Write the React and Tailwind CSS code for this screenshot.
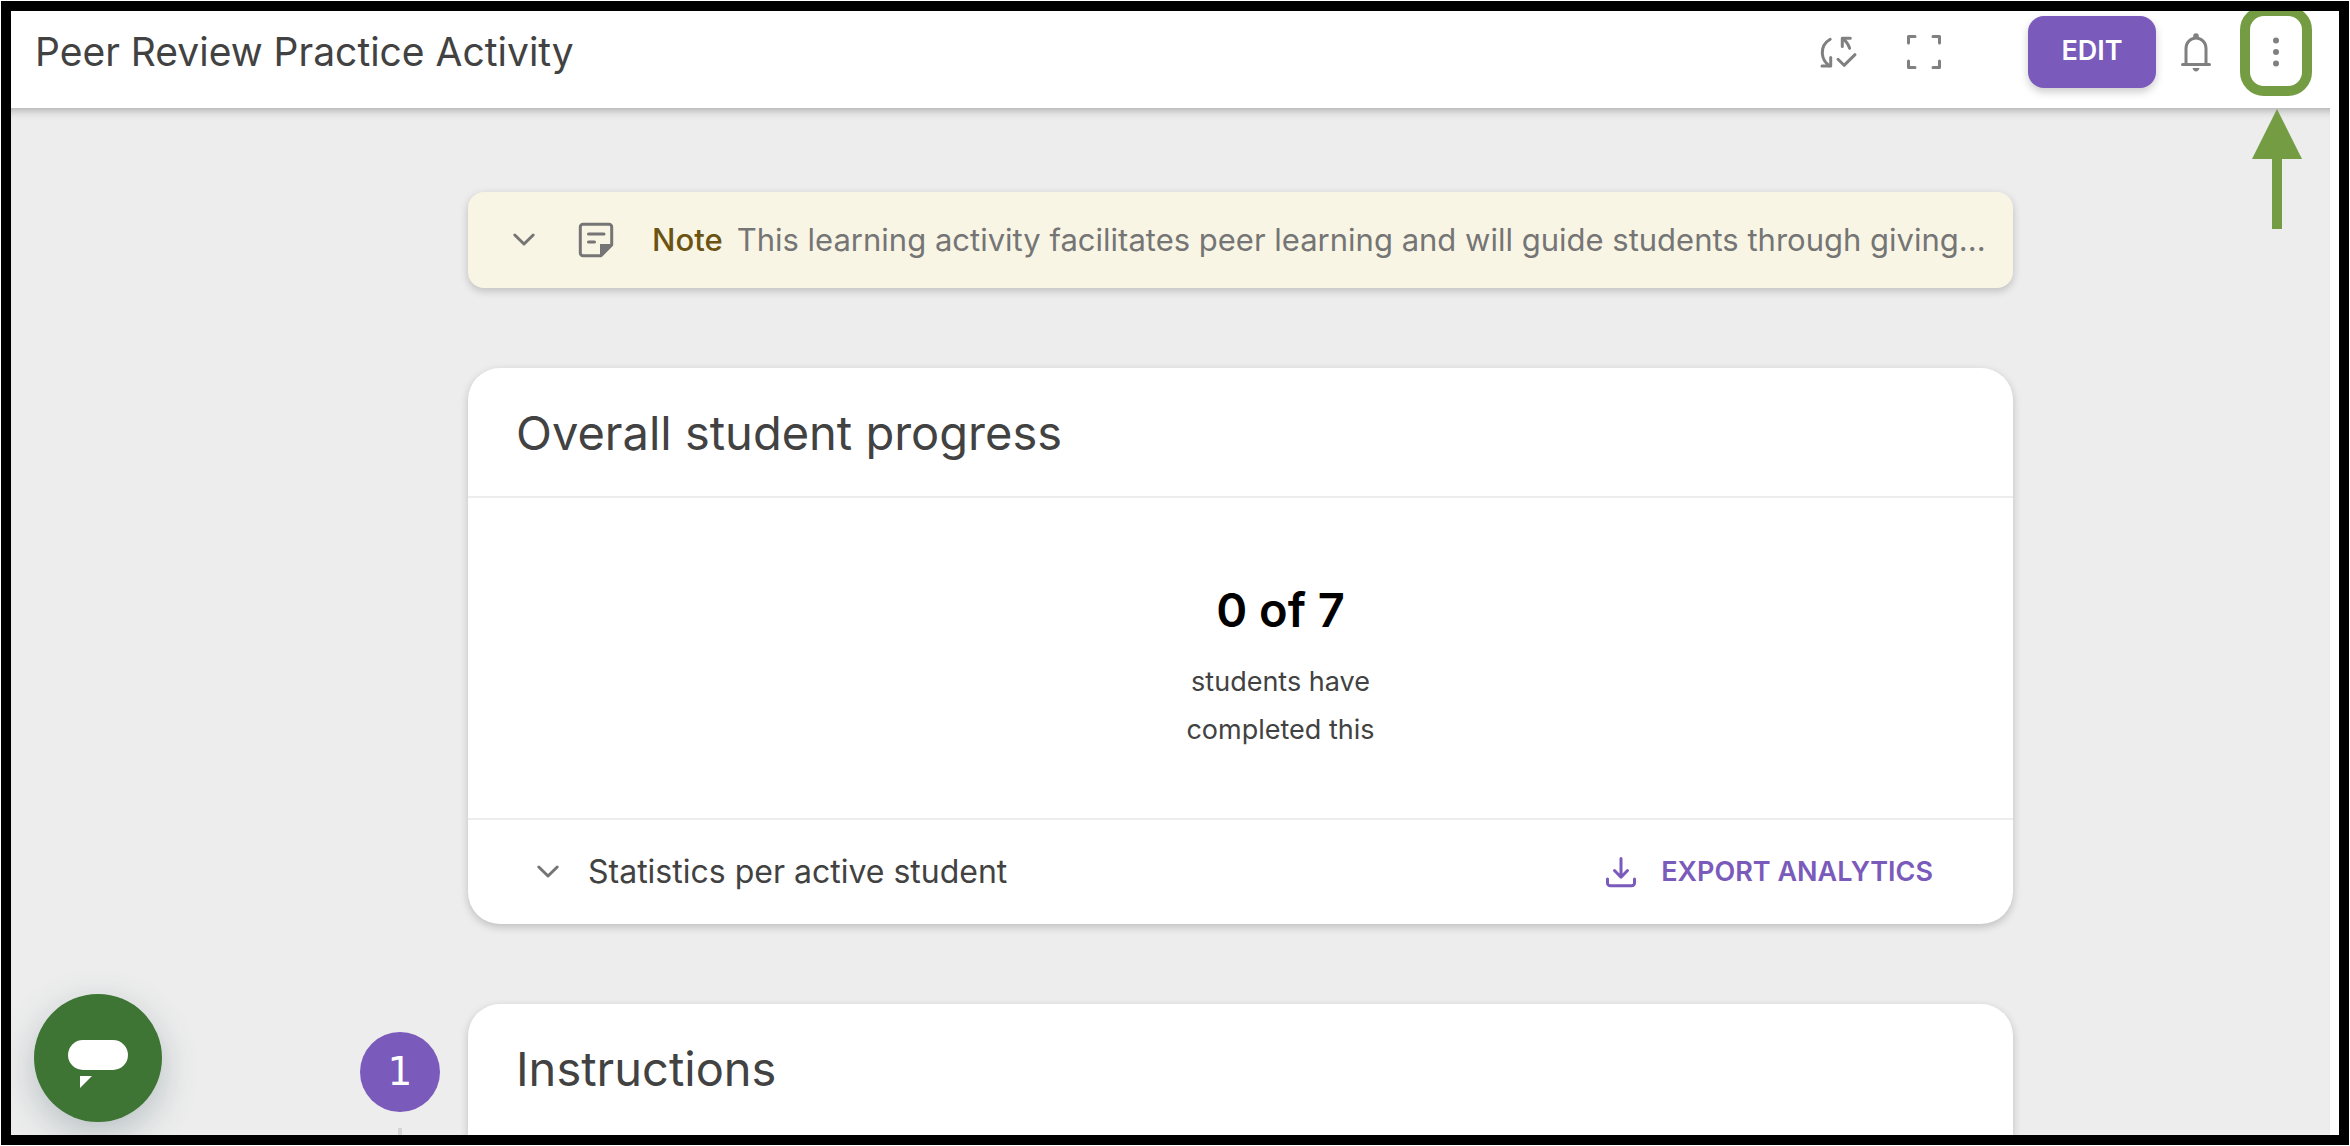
import React, { useState } from 'react';

const Icon = ({ children, className = '' }) => (
  <svg
    viewBox="0 0 48 48"
    className={`w-12 h-12 shrink-0 ${className}`}
    fill="none"
    stroke="currentColor"
    strokeWidth="3"
    strokeLinecap="round"
    strokeLinejoin="round"
    aria-hidden="true"
  >
    {children}
  </svg>
);

const SyncIcon = () => (
  <Icon>
    <path d="M16.2 11.2C10.5 14.5 8 19.5 8.3 25.5c.3 4.6 2.7 9.1 7 12.3" />
    <path d="M16.7 29.5V38H8" />
    <path d="M36.3 10.2h-8v8.3" />
    <path d="M28.6 10.5c3.3 2.6 5.8 5.8 7 9.7" />
    <path d="M24 31.3l6.1 6L41 26.7" />
  </Icon>
);

const FullscreenIcon = () => (
  <Icon>
    <path d="M8.500 15v-6.500H15M33 8.500h6.500V15M39.500 33v6.500H33M15 39.500H8.500V33" />
  </Icon>
);

const BellIcon = () => (
  <Icon>
    <path d="M14 36V20.500a10 10.500 0 0 1 20 0V36M10.500 36.500h27" />
    <circle cx="24" cy="8" r="2.800" fill="currentColor" stroke="none" />
    <path d="M20.500 40h7c-.5 2.200-1.900 3.400-3.500 3.400s-3-1.200-3.500-3.400z" fill="currentColor" stroke="none" />
  </Icon>
);

const DotsIcon = () => (
  <Icon>
    <g fill="currentColor" stroke="none">
      <circle cx="24" cy="12.5" r="3" />
      <circle cx="24" cy="24" r="3" />
      <circle cx="24" cy="35.5" r="3" />
    </g>
  </Icon>
);

const ChevronIcon = () => (
  <Icon className="text-[#757575]">
    <path d="M14.8 19l9.2 9 9.2-9" />
  </Icon>
);

const NoteIcon = () => (
  <Icon className="text-[#757575]">
    <path d="M11 8.300h26a2.700 2.700 0 0 1 2.700 2.700v18L29 39.700H11A2.700 2.700 0 0 1 8.300 37V11A2.700 2.700 0 0 1 11 8.300z" />
    <path d="M28 28h12.500v1.500L29.500 40.500H28z" fill="currentColor" stroke="none" />
    <path d="M16.500 18H32M16.500 26h6" />
  </Icon>
);

const DownloadIcon = () => (
  <Icon>
    <path d="M24 10.500V29M17.500 22.500l6.500 6.700 6.500-6.700M10.500 31v4a2.800 2.800 0 0 0 2.800 2.800h21.400a2.800 2.800 0 0 0 2.800-2.800v-4" />
  </Icon>
);

const IconButton = ({ label, children }) => (
  <button type="button" aria-label={label} className="flex items-center justify-center w-20 h-18 text-[#808080] cursor-pointer">
    {children}
  </button>
);

const Card = ({ title, children }) => (
  <section className="flex-1 min-w-0 bg-white rounded-[32px] shadow-[0_3px_8px_rgba(0,0,0,0.2)]">
    <h2 className="flex items-center h-32 px-12 text-[47px] leading-none">{title}</h2>
    {children}
  </section>
);

const App = () => {
  const [statsOpen, setStatsOpen] = useState(false);
  const [noteOpen, setNoteOpen] = useState(false);

  return (
    <div className="h-screen p-px bg-white font-['Inter',sans-serif] text-[#424242]">
      <div className="relative flex flex-col h-full border-10 border-black bg-white overflow-hidden">

        {/* HEADER */}
        <header className="relative z-10 shrink-0 flex items-center h-[97px] pl-6 pr-[23px] pb-4">
          <h1 className="flex-1 min-w-0 truncate text-[39px] leading-[48px]">Peer Review Practice Activity</h1>
          <div className="flex items-center gap-1.5">
            <IconButton label="Sync status"><SyncIcon /></IconButton>
            <IconButton label="Full screen"><FullscreenIcon /></IconButton>
          </div>
          <button type="button" className="ml-16 w-32 h-18 rounded-2xl bg-[#7a5aba] text-white text-[27px] font-semibold shadow-[0_4px_8px_rgba(0,0,0,0.2)] cursor-pointer">
            EDIT
          </button>
          <IconButton label="Notifications"><BellIcon /></IconButton>
          <div className="relative">
            <IconButton label="More options"><DotsIcon /></IconButton>
            <div className="absolute -top-2.5 left-1 w-[72px] h-[90px] rounded-3xl border-10 border-[#739c43] pointer-events-none" />
            <svg viewBox="0 0 50 120" className="absolute top-[93px] left-4 w-[50px] h-[120px] text-[#739c43] pointer-events-none" fill="currentColor" aria-hidden="true">
              <path d="M25 0l25 50H30v70H20V50H0z" />
            </svg>
          </div>
        </header>

        {/* CONTENT */}
        <main className="flex-1 min-h-0 mr-[9px] overflow-hidden bg-[#ededed] shadow-[inset_0_10px_10px_-8px_rgba(0,0,0,0.3)]">
          <div className="flex flex-col gap-20 max-w-[1685px] mx-auto pt-[84px]">
            <div className="flex items-center h-24 ml-[140px] pl-8 pr-4 rounded-2xl bg-[#f9f5e5] shadow-[0_3px_8px_rgba(0,0,0,0.2)]">
              <button type="button" aria-label="Show note" aria-expanded={noteOpen} onClick={() => setNoteOpen(!noteOpen)} className="mr-6 cursor-pointer">
                <ChevronIcon />
              </button>
              <NoteIcon />
              <span className="ml-8 text-[31px] font-medium text-[#6b5413]">Note</span>
              <p className={`ml-3.5 min-w-0 flex-1 text-[31px] text-[#757575] ${noteOpen ? '' : 'truncate'}`}>
                This learning activity facilitates peer learning and will guide students through giving...
              </p>
            </div>

            <div className="flex ml-[140px]">
              <Card title="Overall student progress">
                <div className="flex flex-col items-center justify-center h-[324px] pt-5 pl-20 border-y-2 border-[#ededed]">
                  <strong className="text-[47px] leading-[56px] font-semibold text-black">0 of 7</strong>
                  <p className="mt-5 w-[200px] text-center text-[27px] leading-[48px]">students have completed this</p>
                </div>
                <div className="flex items-center justify-between h-[104px] pl-14 pr-20">
                  <button type="button" aria-expanded={statsOpen} onClick={() => setStatsOpen(!statsOpen)} className="flex items-center gap-4 text-[32px] cursor-pointer">
                    <ChevronIcon />
                    Statistics per active student
                  </button>
                  <button type="button" className="flex items-center gap-4 text-[27px] font-semibold text-[#7a5aba] cursor-pointer">
                    <DownloadIcon />
                    EXPORT ANALYTICS
                  </button>
                </div>
              </Card>
            </div>

            <div className="flex">
              <div className="flex flex-col items-center gap-4 w-20 ml-8 mr-7 pt-7">
                <span className="flex items-center justify-center w-20 h-20 shrink-0 rounded-full bg-[#7a5aba] text-white font-['DejaVu_Sans',sans-serif] text-[39px]">1</span>
                <span className="flex-1 w-1 bg-[#d5d5d5]" />
              </div>
              <Card title="Instructions">
                <div className="h-40" />
              </Card>
            </div>
          </div>
        </main>

        <button type="button" aria-label="Open chat" className="absolute bottom-[13px] left-[23px] w-32 h-32 rounded-full bg-[#3e7434] shadow-[0_12px_36px_rgba(60,90,100,0.3)] cursor-pointer">
          <svg viewBox="0 0 128 128" fill="#fff" aria-hidden="true">
            <rect x="34" y="46" width="60" height="30" rx="15" />
            <path d="M46 82h12L46 94z" />
          </svg>
        </button>
      </div>
    </div>
  );
};

export default App;
